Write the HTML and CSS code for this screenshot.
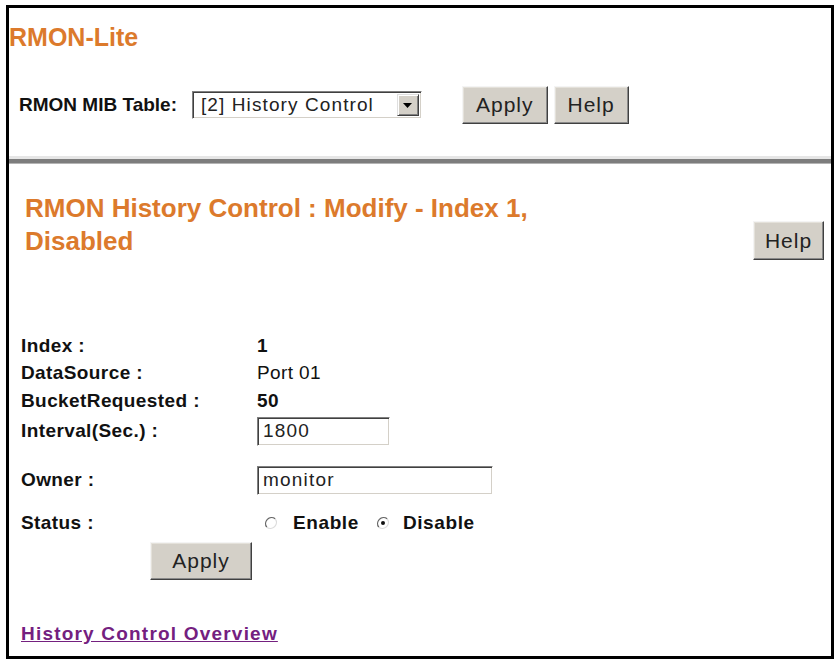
FILE: index.html
```html
<!DOCTYPE html>
<html>
<head>
<meta charset="utf-8">
<title>RMON-Lite</title>
<link rel="stylesheet" href="styles.css">
</head>
<body>
<div class="caption"><div class="caption-text">Figure 86 &nbsp; Advanced Application &gt; RMON-Lite &gt; History Control: Modify</div></div>
<div class="frame">
  <div class="top">
    <div class="title">RMON-Lite</div>
    <div class="mib-row">
      <span class="mib-label">RMON MIB Table:</span>
      <div class="select">
        <span class="select-text">[2] History Control</span>
        <span class="select-arrow"><svg width="9" height="5" viewBox="0 0 9 5"><path d="M0 0H9L4.5 5Z" fill="#000"/></svg></span>
      </div>
      <div class="btn-group">
        <button class="btn">Apply</button>
        <button class="btn">Help</button>
      </div>
    </div>
  </div>
  <div class="separator"></div>
  <div class="bottom">
    <div class="head-row">
      <div class="heading">RMON History Control : Modify - Index 1, Disabled</div>
      <button class="btn btn-help">Help</button>
    </div>
    <div class="form">
      <div class="label r1">Index :</div><div class="value bold">1</div>
      <div class="label">DataSource :</div><div class="value">Port 01</div>
      <div class="label">BucketRequested :</div><div class="value bold">50</div>
      <div class="label">Interval(Sec.) :</div><div class="value"><div class="input input-short">1800</div></div>
      <div class="label">Owner :</div><div class="value"><div class="input input-long">monitor</div></div>
      <div class="label">Status :</div>
      <div class="value radios">
        <svg class="radio" width="14" height="14" viewBox="0 0 14 14"><circle cx="7" cy="7" r="6" fill="#fff"/><path d="M2.8 11.2A6 6 0 0 1 11.2 2.8" fill="none" stroke="#666" stroke-width="1.3"/><path d="M11.2 2.8A6 6 0 0 1 2.8 11.2" fill="none" stroke="#dcdcdc" stroke-width="1.3"/></svg>
        <span class="radio-label">Enable</span>
        <svg class="radio radio2" width="14" height="14" viewBox="0 0 14 14"><circle cx="7" cy="7" r="6" fill="#fff"/><path d="M2.8 11.2A6 6 0 0 1 11.2 2.8" fill="none" stroke="#666" stroke-width="1.3"/><path d="M11.2 2.8A6 6 0 0 1 2.8 11.2" fill="none" stroke="#dcdcdc" stroke-width="1.3"/><circle cx="7" cy="7" r="2" fill="#111"/></svg>
        <span class="radio-label">Disable</span>
      </div>
    </div>
    <button class="btn btn-apply">Apply</button>
    <div class="link-row"><a class="overview" href="#">History Control Overview</a></div>
  </div>
</div>
</body>
</html>
```
FILE: styles.css
```css
html, body {
  margin: 0;
  padding: 0;
  background: #fff;
  font-family: "Liberation Sans", Arial, sans-serif;
  color: #111;
}
.caption {
  height: 5px;
  overflow: hidden;
}
.caption-text {
  font-size: 20px;
  font-weight: bold;
  line-height: 20px;
  margin-top: -23px;
  white-space: nowrap;
  color: #000;
}
.frame {
  margin-left: 6px;
  width: 822px;
  height: 648px;
  border: 3px solid #000;
  display: flex;
  flex-direction: column;
}
.top {
  padding-top: 15px;
}
.title {
  font-size: 25px;
  font-weight: bold;
  line-height: 29px;
  color: #dc7a2c;
}
.mib-row {
  display: flex;
  align-items: center;
  height: 38px;
  margin-top: 34px;
  padding-left: 10px;
}
.mib-label {
  font-size: 19px;
  font-weight: bold;
  margin-right: 15px;
}
.select {
  width: 230px;
  height: 28px;
  box-sizing: border-box;
  border: 1px solid;
  border-color: #808080 #fff #fff #808080;
  box-shadow: inset 1px 1px #404040, inset -1px -1px #d4d0c8;
  display: flex;
  align-items: center;
  justify-content: space-between;
  padding: 0 2px 0 8px;
  background: #fff;
}
.select-text {
  font-size: 19px;
  letter-spacing: 1.1px;
  color: #222;
}
.select-arrow {
  width: 22px;
  height: 22px;
  box-sizing: border-box;
  background: #d4d0c8;
  border: 1px solid;
  border-color: #dfdfdf #404040 #404040 #dfdfdf;
  box-shadow: inset 1px 1px #fff, inset -1px -1px #808080;
  display: flex;
  align-items: center;
  justify-content: center;
}
.btn-group {
  display: flex;
  gap: 6px;
  margin-left: 40px;
}
.btn {
  font-family: "Liberation Sans", Arial, sans-serif;
  font-size: 21px;
  letter-spacing: 1px;
  color: #222;
  background: #d4d0c8;
  height: 38px;
  padding: 0 13px;
  border: 1px solid;
  border-color: #f4f4f4 #404040 #404040 #f4f4f4;
  box-shadow: inset -1px -1px #8a8a8a, inset 1px 1px #e4e1da;
  border-radius: 0;
  margin: 0;
}
.separator {
  margin-top: 32px;
  height: 4px;
  background: #7d7d7d;
  border-top: 3px solid #e6e6e6;
  border-bottom: 1px solid #b4b4b4;
}
.bottom {
  padding: 28px 7px 0 16px;
}
.head-row {
  display: flex;
  justify-content: space-between;
  align-items: flex-start;
}
.heading {
  width: 560px;
  font-size: 26px;
  font-weight: bold;
  line-height: 33px;
  color: #dc7a2c;
}
.btn-help {
  margin-top: 29px;
  width: 71px;
  height: 39px;
  padding: 0;
}
.form {
  margin-top: 72px;
  margin-left: -4px;
  display: grid;
  grid-template-columns: 236px 1fr;
  grid-template-rows: 27px 28px 27px 34px 64px 22px;
  align-items: center;
}
.label {
  font-size: 19px;
  font-weight: bold;
  letter-spacing: 0.4px;
  white-space: nowrap;
}
.value {
  font-size: 19px;
  letter-spacing: 0.4px;
}
.bold {
  font-weight: bold;
}
.input {
  box-sizing: border-box;
  height: 29px;
  border: 1px solid;
  border-color: #808080 #fff #fff #808080;
  box-shadow: inset 1px 1px #404040, inset -1px -1px #d4d0c8;
  padding: 0 5px;
  display: flex;
  align-items: center;
  font-size: 19px;
  letter-spacing: 1.2px;
  color: #222;
  background: #fff;
}
.input-short {
  width: 133px;
}
.input-long {
  width: 236px;
}
.radios {
  display: flex;
  align-items: center;
  padding-left: 7px;
}
.radio {
  flex: none;
}
.radio2 {
  margin-left: 17px;
}
.radio-label {
  font-weight: bold;
  margin-left: 15px;
  letter-spacing: 0.6px;
}
.radio2 + .radio-label {
  margin-left: 13px;
}
.btn-apply {
  display: block;
  margin-top: 8px;
  margin-left: 125px;
  width: 102px;
  padding: 0;
}
.link-row {
  margin-top: 43px;
  margin-left: -4px;
}
.overview {
  font-size: 19px;
  font-weight: bold;
  letter-spacing: 1.2px;
  color: #74207f;
  text-decoration: underline;
}
```
